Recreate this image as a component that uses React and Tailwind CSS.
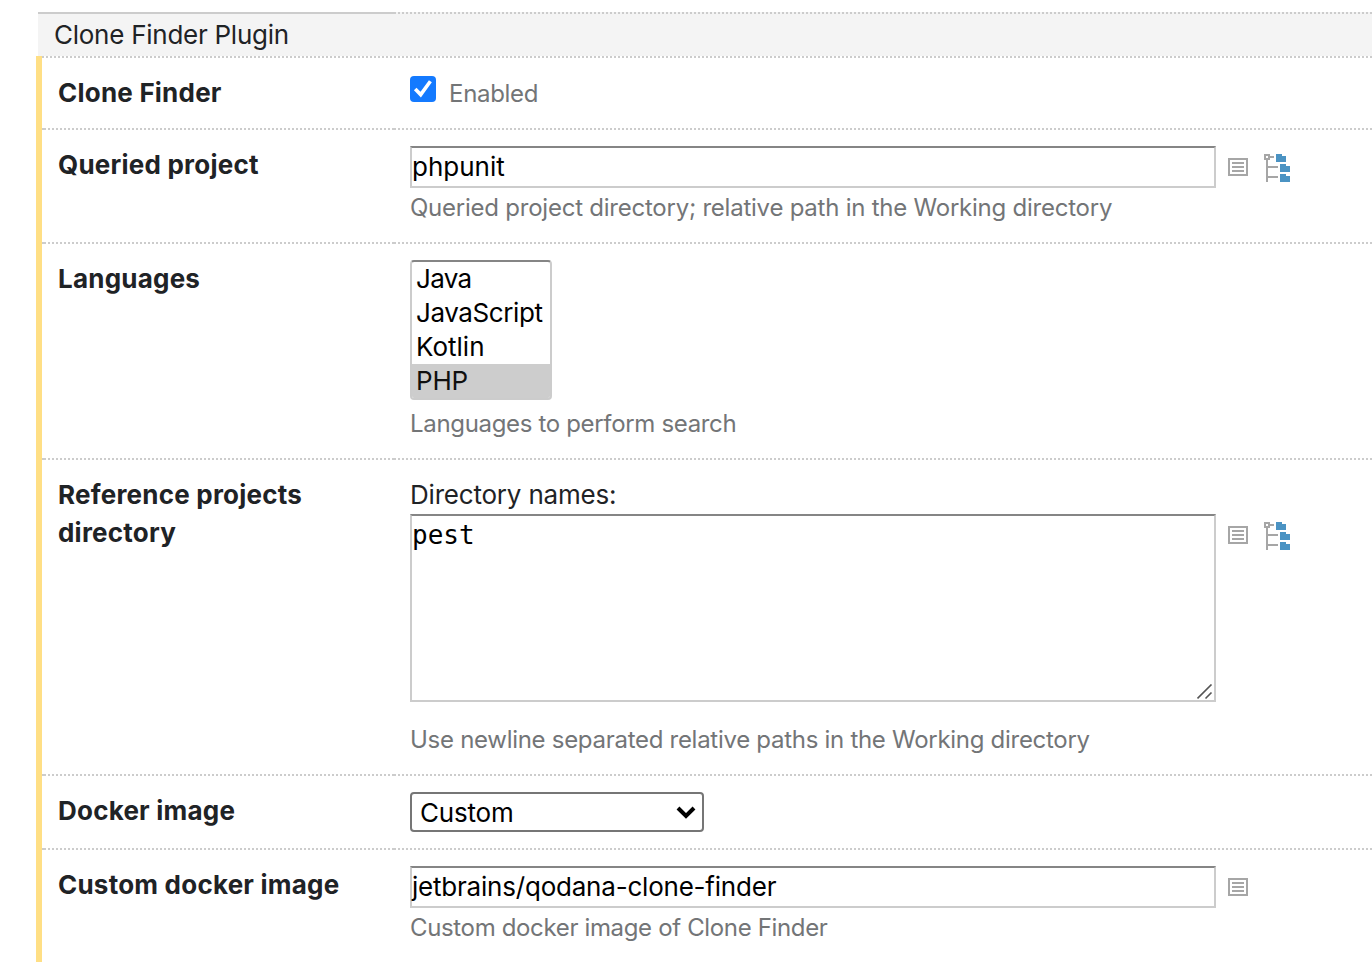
import React from "react";

const DOTS = "bg-[repeating-linear-gradient(90deg,transparent_0px,transparent_2px,#cccccc_2px,#cccccc_4px)]";

function DottedLine({ joined = false }) {
  if (joined) {
    return (
      <div className="flex h-[2px]">
        <div className="w-[2px] bg-[#cccccc]" />
        <div className={"flex-1 " + DOTS} />
      </div>
    );
  }
  return (
    <div className="flex h-[2px]">
      <div className="w-[4px] bg-[#cccccc]" />
      <div className={"w-[346px] " + DOTS} />
      <div className="w-[4px] bg-[#cccccc]" />
      <div className={"flex-1 " + DOTS} />
    </div>
  );
}

function Row({ label, height, joined, children }) {
  return (
    <div className={"flex flex-col " + height}>
      <DottedLine joined={joined} />
      <div className="flex flex-1 pt-[16px]">
        <div className="w-[368px] pl-[16px] pr-[60px] text-[26px] leading-[38px] font-bold tracking-[0.22px] text-[#1f2326]">{label}</div>
        <div className="flex-1">{children}</div>
      </div>
    </div>
  );
}

function Hint({ className = "", children }) {
  return <div className={"whitespace-nowrap text-[24px] leading-[32px] text-[#737577] " + className}>{children}</div>;
}

function ListIcon() {
  return (
    <svg width="20" height="18" viewBox="0 0 20 18" shapeRendering="crispEdges" className="shrink-0">
      <path d="M0 0H20V18H0ZM2 2V16H18V2Z" fill="#a6a6a6" fillRule="evenodd" />
      <path d="M4 4H16V6H4ZM4 8H16V10H4ZM4 12H16V14H4Z" fill="#a6a6a6" />
    </svg>
  );
}

function TreeIcon() {
  return (
    <svg width="26" height="28" viewBox="0 0 26 28" shapeRendering="crispEdges" className="shrink-0">
      <path d="M0 0H6V6H0ZM2 2V4H4V2Z" fill="#a6a6a6" fillRule="evenodd" />
      <path d="M6 2H10V4H6ZM2 6H4V28H2ZM4 12H14V14H4ZM4 22H14V24H4Z" fill="#a6a6a6" />
      <path d="M12 0H18V2H22V8H12ZM16 10H22V12H26V18H16ZM16 20H22V22H26V28H16Z" fill="#4b93c3" />
    </svg>
  );
}

function Icons({ tree = false }) {
  return (
    <div className="ml-[12px] flex items-start gap-[16px] pt-[8px]">
      <div className="pt-[4px]"><ListIcon /></div>
      {tree && <TreeIcon />}
    </div>
  );
}

function TextBox({ children, tree, spacing = "" }) {
  return (
    <div className="flex">
      <div className={"h-[42px] w-[806px] border-2 border-[#cccccc] border-t-[#858585] text-[26px] leading-[38px] text-black " + spacing}>
        {children}
      </div>
      <Icons tree={tree} />
    </div>
  );
}

export default function App() {
  return (
    <div className="h-[978px] w-[1372px] overflow-hidden bg-white pt-[12px] font-['Inter','Liberation_Sans',sans-serif] text-[#1f2326]">
      <div className="ml-[38px] h-[44px] bg-[#f4f4f4]">
        <div className="flex h-[2px]">
          <div className="w-[358px] bg-[#cccccc]" />
          <div className={"flex-1 " + DOTS} />
        </div>
        <div className="pl-[16px] text-[26px] leading-[42px] tracking-[-0.26px]">Clone Finder Plugin</div>
      </div>
      <div className="ml-[36px] border-l-[6px] border-[#ffdf85]">
        <Row label="Clone Finder" height="h-[72px]" joined>
          <div className="flex">
            <div className="mt-[2px] flex h-[26px] w-[26px] items-center justify-center rounded-[4px] bg-[#147aff]">
              <svg width="26" height="26" viewBox="0 0 26 26" fill="none">
                <path d="M5.2 13L10.7 18.6L20.4 5.2" stroke="#fff" strokeWidth="3.6" />
              </svg>
            </div>
            <Hint className="ml-[13px] mt-[4px] tracking-[-0.3px]">Enabled</Hint>
          </div>
        </Row>
        <Row label="Queried project" height="h-[114px]">
          <TextBox tree>phpunit</TextBox>
          <Hint className="mt-[4px] tracking-[-0.235px]">Queried project directory; relative path in the Working directory</Hint>
        </Row>
        <Row label="Languages" height="h-[216px]">
          <div className="h-[140px] w-[142px] overflow-hidden rounded-[4px] border-2 border-[#cccccc] border-t-[#858585] text-[26px] leading-[34px] text-black">
            <div className="pl-[4px] tracking-[-0.7px]">Java</div>
            <div className="pl-[4px] tracking-[-0.4px]">JavaScript</div>
            <div className="pl-[4px]">Kotlin</div>
            <div className="bg-[#cdcdcd] pl-[4px] tracking-[-0.2px] text-[#101010]">PHP</div>
          </div>
          <Hint className="mt-[8px] tracking-[-0.33px]">Languages to perform search</Hint>
        </Row>
        <Row label="Reference projects directory" height="h-[316px]">
          <div className="text-[26px] leading-[38px] tracking-[-0.2px]">Directory names:</div>
          <div className="flex">
            <div className="flex h-[188px] w-[806px] items-start justify-between border-2 border-[#cccccc] border-t-[#858585]">
              <div className="pt-[2px] font-['DejaVu_Sans_Mono',monospace] text-[26px] leading-[34px] text-black">pest</div>
              <svg width="16" height="16" viewBox="0 0 16 16" fill="none" className="mr-[1px] self-end">
                <path d="M0.5 14.5L14.5 0.5M8.5 14.5L14.5 8.5" stroke="#555" strokeWidth="1.6" />
              </svg>
            </div>
            <Icons tree />
          </div>
          <Hint className="mt-[22px] tracking-[-0.285px]">Use newline separated relative paths in the Working directory</Hint>
        </Row>
        <Row label="Docker image" height="h-[74px]">
          <div className="flex h-[40px] w-[294px] items-center justify-between rounded-[4px] border-2 border-[#767676] pl-[8px] pr-[6px] text-[26px] leading-[36px] tracking-[-0.2px] text-black">
            <span className="pt-[2px]">Custom</span>
            <svg width="20" height="14" viewBox="0 0 20 14" fill="none">
              <path d="M2 3L10 11L18 3" stroke="#000" strokeWidth="4" />
            </svg>
          </div>
        </Row>
        <Row label="Custom docker image" height="h-[114px]">
          <TextBox spacing="tracking-[-0.21px]">jetbrains/qodana-clone-finder</TextBox>
          <Hint className="mt-[4px] tracking-[-0.35px]">Custom docker image of Clone Finder</Hint>
        </Row>
      </div>
    </div>
  );
}
